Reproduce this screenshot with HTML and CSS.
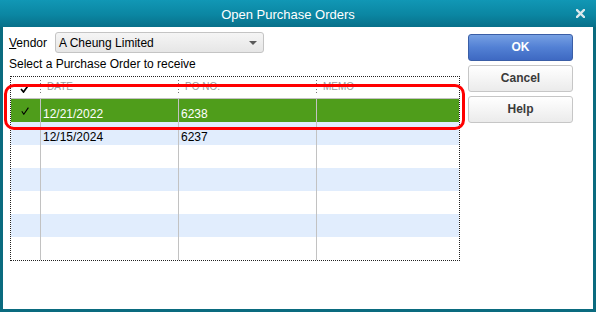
FILE: index.html
```html
<!DOCTYPE html>
<html lang="en">

<head>
    <meta charset="UTF-8">
    <title>Open Purchase Orders</title>
    <link rel="stylesheet" href="styles.css">
</head>

<body>
    <div class="window">
        <div class="titlebar">
            <span class="title">Open Purchase Orders</span>
            <span class="close">
                <svg width="9" height="9" viewBox="0 0 9 9">
                    <path d="M1 1 L8 8 M8 1 L1 8" stroke="#dbe8ec" stroke-width="2.4" stroke-linecap="square" />
                </svg>
            </span>
        </div>

        <div class="content">
            <div class="main">
                <div class="vendor-row">
                    <span class="vendor-label"><u>V</u>endor</span>
                    <div class="combo">
                        <span class="combo-text">A Cheung Limited</span>
                        <svg class="combo-arrow" width="8" height="4" viewBox="0 0 8 4">
                            <path d="M0 0 L8 0 L4 4 Z" fill="#5a5a5a" />
                        </svg>
                    </div>
                </div>
                <div class="hint">Select a Purchase Order to receive</div>

                <div class="grid">
                    <div class="row head">
                        <div class="cell check">
                            <svg width="9" height="8" viewBox="0 0 9 8">
                                <path d="M1 4 L3.5 7 L8 0.8" fill="none" stroke="#000" stroke-width="1.7" />
                            </svg>
                        </div>
                        <div class="cell date">DATE</div>
                        <div class="cell po">PO NO.</div>
                        <div class="cell memo">MEMO</div>
                    </div>
                    <div class="row selected">
                        <div class="cell check">
                            <svg width="8" height="8" viewBox="0 0 8 8">
                                <path d="M0.8 4.2 L2.8 7.2 L7.4 0.6" fill="none" stroke="#000" stroke-width="1.1" />
                            </svg>
                        </div>
                        <div class="cell date">12/21/2022</div>
                        <div class="cell po">6238</div>
                        <div class="cell memo"></div>
                    </div>
                    <div class="row alt">
                        <div class="cell check"></div>
                        <div class="cell date">12/15/2024</div>
                        <div class="cell po">6237</div>
                        <div class="cell memo"></div>
                    </div>
                    <div class="row">
                        <div class="cell check"></div>
                        <div class="cell date"></div>
                        <div class="cell po"></div>
                        <div class="cell memo"></div>
                    </div>
                    <div class="row alt">
                        <div class="cell check"></div>
                        <div class="cell date"></div>
                        <div class="cell po"></div>
                        <div class="cell memo"></div>
                    </div>
                    <div class="row">
                        <div class="cell check"></div>
                        <div class="cell date"></div>
                        <div class="cell po"></div>
                        <div class="cell memo"></div>
                    </div>
                    <div class="row alt">
                        <div class="cell check"></div>
                        <div class="cell date"></div>
                        <div class="cell po"></div>
                        <div class="cell memo"></div>
                    </div>
                    <div class="row">
                        <div class="cell check"></div>
                        <div class="cell date"></div>
                        <div class="cell po"></div>
                        <div class="cell memo"></div>
                    </div>
                </div>
            </div>

            <div class="buttons">
                <div class="btn primary">OK</div>
                <div class="btn">Cancel</div>
                <div class="btn">Help</div>
            </div>
        </div>

        <!-- red highlight drawn over the first row -->
        <div class="callout"></div>
    </div>
</body>

</html>
```

FILE: styles.css
```css
body {
    margin: 0;
    background-color: #ffffff;
    font-family: "Liberation Sans", Arial, sans-serif;
    font-size: 12px;
    color: #000;
}

.window {
    position: relative;
    width: 596px;
    height: 312px;
    box-sizing: border-box;
    padding: 0 3px 3px 3px;
    background-color: #0a6b7f;
    display: flex;
    flex-direction: column;
}

.titlebar {
    height: 27px;
    margin: 0 -3px;
    box-sizing: border-box;
    padding-top: 2px;
    display: flex;
    align-items: center;
    background: linear-gradient(#1197b5, #0b86a2 55%, #08708a);
}

.title {
    flex: 1;
    text-align: center;
    color: #ffffff;
    font-size: 13px;
    line-height: 25px;
}

.close {
    display: flex;
    padding: 0 11px 2px 0;
}

.content {
    flex: 1;
    background-color: #ffffff;
    display: flex;
    gap: 10px;
    padding: 5px 20px 0 6px;
}

.main {
    width: 449px;
}

.vendor-row {
    display: flex;
    align-items: center;
    height: 21px;
}

.vendor-label {
    width: 46px;
}

.combo {
    width: 209px;
    height: 21px;
    box-sizing: border-box;
    border: 1px solid #c4c4c4;
    border-radius: 3px;
    background: linear-gradient(#f5f5f5, #e6e6e6);
    display: flex;
    align-items: center;
    padding: 0 6px 0 3px;
}

.combo-text {
    flex: 1;
}

.hint {
    margin-top: 4px;
    line-height: 14px;
}

.grid {
    margin: 5px 0 0 1px;
    width: 448px;
    border: 1px dotted #222;
}

.row {
    display: flex;
    height: 23px;
}

.row.alt {
    background-color: #e1edfd;
}

.row.selected {
    background-color: #4f9d1b;
    color: #ffffff;
}

.cell {
    box-sizing: border-box;
    border-left: 1px solid #c2c2c2;
    padding: 8px 0 0 2px;
    line-height: 14px;
    white-space: nowrap;
}

.cell.check {
    width: 29px;
    border-left: none;
    padding: 5px 0 0 10px;
}

.cell.date,
.cell.po {
    width: 138px;
}

.cell.memo {
    flex: 1;
}

.row.head {
    height: 21px;
    border-bottom: 1px solid #c2c2c2;
}

.row.head .cell {
    border-left: none;
    padding: 0 0 0 7px;
    line-height: 20px;
    font-size: 10px;
    color: #9c9c9c;
    background-image: repeating-linear-gradient(to bottom, #777 0 1px, transparent 1px 3px);
    background-size: 1px 13px;
    background-position: 0 3px;
    background-repeat: no-repeat;
}

.row.head .cell.check {
    padding: 3px 0 0 9px;
    background-image: none;
}

.buttons {
    width: 105px;
    margin-top: 2px;
    display: flex;
    flex-direction: column;
    gap: 4px;
}

.btn {
    height: 27px;
    box-sizing: border-box;
    border: 1px solid #c6c6c6;
    border-radius: 3px;
    background: linear-gradient(#ffffff, #ebebeb);
    color: #3a3a3a;
    font-weight: bold;
    text-align: center;
    line-height: 25px;
}

.btn.primary {
    border-color: #3a5ea6;
    background: linear-gradient(#76a0e3, #5280d4 50%, #3e69c2);
    color: #ffffff;
}

.callout {
    position: absolute;
    left: 4px;
    top: 84px;
    width: 461px;
    height: 46px;
    box-sizing: border-box;
    border: 3px solid #ff0000;
    border-radius: 10px;
}
```
